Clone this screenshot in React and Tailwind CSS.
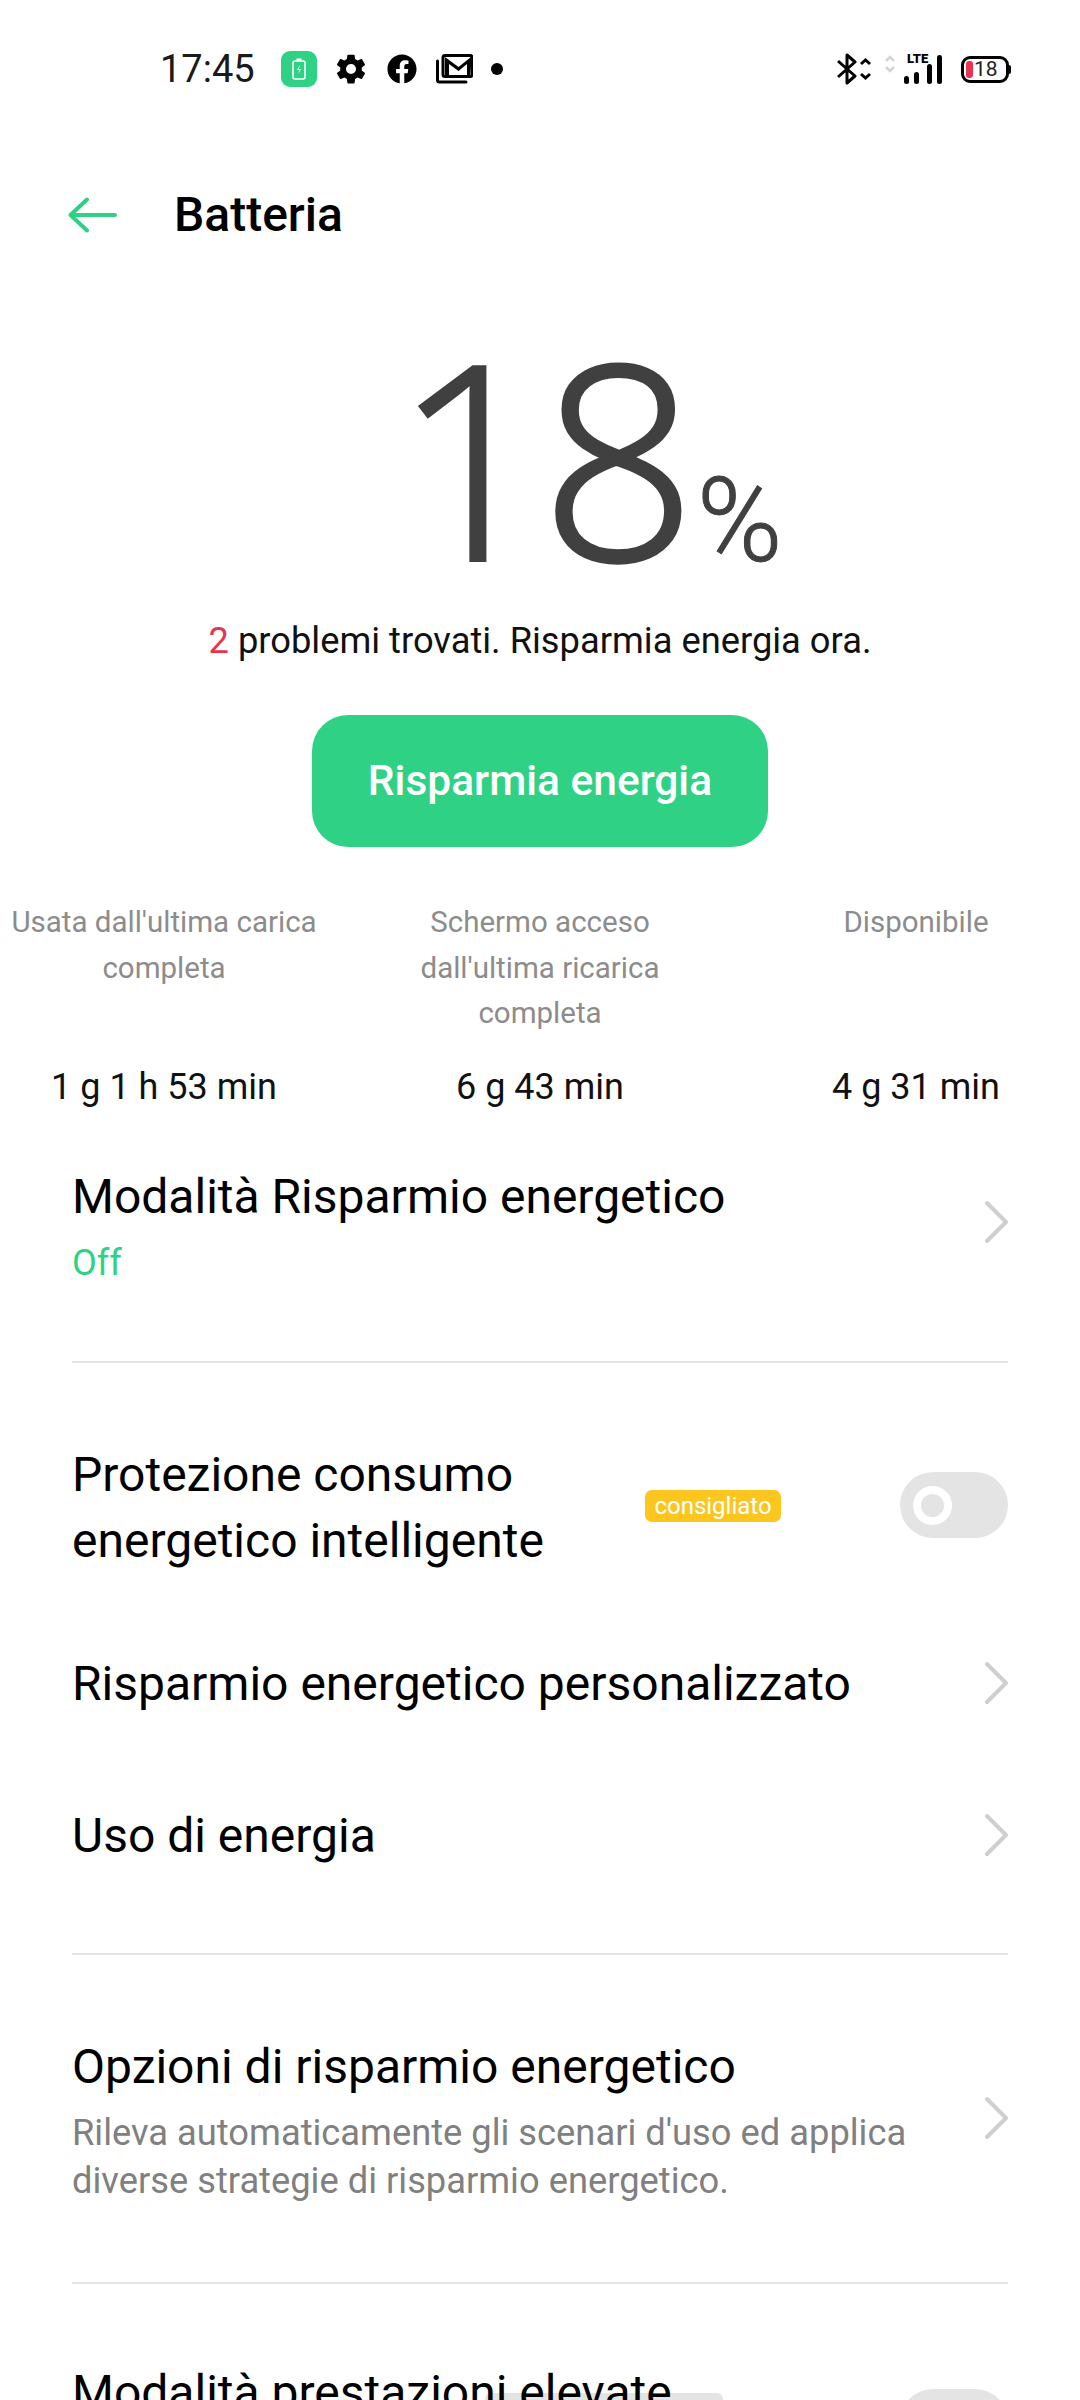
import React from 'react'
import { FaFacebook } from 'react-icons/fa'
import { IoSettingsSharp } from 'react-icons/io5'

const Chevron = ({ className = '' }) => (
  <svg width="26" height="44" viewBox="0 0 26 44" fill="none" className={`shrink-0 ${className}`}>
    <path d="M5 3l19 19L5 41" stroke="#cfcfcf" strokeWidth="4" strokeLinecap="round" strokeLinejoin="round" />
  </svg>
)

const Toggle = () => (
  <div className="w-[108px] h-[66px] rounded-full bg-[#e4e4e4] flex items-center pl-[13px] shrink-0">
    <div className="w-[39px] h-[39px] rounded-full border-[8px] border-white" />
  </div>
)

const StatusBar = () => (
  <div className="h-[138px] flex items-center pl-[160px] pr-[69px]">
    <span className="text-[38px] leading-none text-[#1a1a1a] w-[121px]">17:45</span>
    <div className="w-[36px] h-[36px] rounded-[9px] bg-[#2fd284] flex items-center justify-center">
      <svg width="14" height="22" viewBox="0 0 14 22" fill="none">
        <rect x="1" y="3" width="12" height="18" rx="2" stroke="white" strokeWidth="1.6" />
        <rect x="4.500" y="0.500" width="5" height="2" fill="white" />
        <path d="M8 7l-3 5h2.500L6 16l3.200-5H6.800z" fill="white" />
      </svg>
    </div>
    <IoSettingsSharp className="ml-[18px] text-black" size={32} />
    <FaFacebook className="ml-[20px] text-black" size={30} />
    <svg className="ml-[19px]" width="37" height="30" viewBox="0 0 37 30" fill="none">
      <rect x="7" y="1.500" width="29" height="21" rx="2" stroke="black" strokeWidth="3" />
      <path d="M9 3l13.500 10L35 3v9l-1 9h-3V10l-8.500 7L13 10v11H9z" fill="black" />
      <path d="M1.500 7v19a2 2 0 002 2H30" stroke="black" strokeWidth="3" strokeLinecap="round" />
    </svg>
    <div className="ml-[18px] w-[12px] h-[12px] rounded-full bg-black" />
    <div className="ml-auto flex items-center">
      <svg width="34" height="32" viewBox="0 0 34 32" fill="none" stroke="black" strokeWidth="3">
        <path d="M1 8l17 15-8 7V2l8 7L1 24" strokeLinejoin="round" />
        <path d="M24 11l4.500-4 4.500 4M24 21l4.500 4 4.500-4" />
      </svg>
      <svg className="ml-[14px] -mt-[10px]" width="10" height="20" viewBox="0 0 10 20" fill="none" stroke="#d4d4d4" strokeWidth="2.500">
        <path d="M1 7l4-4 4 4M1 13l4 4 4-4" />
      </svg>
      <div className="relative ml-[9px] w-[38px] h-[29px] flex items-end">
        <span className="absolute left-[3px] top-[-3px] text-[13px] font-black leading-none text-black">LTE</span>
        <div className="w-[5px] h-[8px] rounded-sm bg-black" />
        <div className="ml-[5px] w-[5px] h-[12px] rounded-sm bg-black" />
        <div className="ml-[8px] w-[5px] h-[20px] rounded-sm bg-black" />
        <div className="ml-[5px] w-[5px] h-[29px] rounded-sm bg-black" />
      </div>
      <div className="ml-[19px] w-[48px] h-[27px] border-[3px] border-black rounded-[9px] flex items-center pl-[2px]">
        <div className="w-[7px] h-[17px] rounded-[3px] bg-[#e8354f] shrink-0" />
        <span className="text-[21px] leading-none text-[#222] ml-[1px]">18</span>
      </div>
      <div className="w-[2px] h-[9px] rounded-r-sm bg-black" />
    </div>
  </div>
)

const Stat = ({ label, value, labelWidth }) => (
  <div className="flex flex-col items-center w-[376px] h-[210px]">
    <div className={`text-[29.500px] leading-[45.500px] text-[#8c8c8c] text-center ${labelWidth}`}>{label}</div>
    <div className="mt-auto text-[36px] leading-[46px] text-[#111]">{value}</div>
  </div>
)

const Row = ({ title }) => (
  <div className="flex items-center justify-between h-[152px]">
    <span className="text-[48px] leading-[66px] text-black pt-[2px]">{title}</span>
    <Chevron />
  </div>
)

export default function App() {
  return (
    <div className="w-[1080px] h-[2400px] overflow-hidden bg-white font-['Roboto',sans-serif]">
      <StatusBar />

      {/* header */}
      <div className="h-[154px] flex items-center pl-[68px]">
        <svg width="49" height="36" viewBox="0 0 49 36" fill="none">
          <path d="M19 2.500L2.500 18 19 33.500M3 18h44" stroke="#2fd284" strokeWidth="4" strokeLinecap="round" strokeLinejoin="round" />
        </svg>
        <h1 className="ml-[57px] text-[48px] leading-none font-medium text-black">Batteria</h1>
      </div>

      {/* percent */}
      <div className="h-[315px] flex items-end justify-center pl-[97px]">
        <span className="font-['Open_Sans',sans-serif] text-[270px] leading-[230px] font-light tracking-[-7px] text-[#404040] [-webkit-text-stroke:4px_#404040] mb-[37px]">18</span>
        <span className="text-[116px] leading-[116px] font-light text-[#404040] [-webkit-text-stroke:1px_#404040] ml-[8px] mb-[28px]">%</span>
      </div>

      <p className="mt-[11px] text-center text-[36.300px] leading-[46px] text-[#111]">
        <span className="text-[#e8354f]">2</span> problemi trovati. Risparmia energia ora.
      </p>

      <div className="flex justify-center mt-[51px]">
        <button className="w-[456px] h-[132px] rounded-[36px] bg-[#2fd284] text-white text-[42.500px] font-medium">Risparmia energia</button>
      </div>

      <div className="flex justify-between -ml-[24px] w-[1128px] mt-[53px]">
        <Stat label="Usata dall'ultima carica completa" value="1 g 1 h 53 min" labelWidth="w-[330px]" />
        <Stat label="Schermo acceso dall'ultima ricarica completa" value="6 g 43 min" labelWidth="w-[260px]" />
        <Stat label="Disponibile" value="4 g 31 min" labelWidth="w-[260px]" />
      </div>

      <div className="px-[72px]">
        <div className="h-[253px] flex items-start justify-between border-b-2 border-[#e4e4e4] pt-[54px]">
          <div>
            <div className="text-[48px] leading-[66px] text-black">Modalità Risparmio energetico</div>
            <div className="text-[36px] leading-[50px] text-[#2fd284] mt-[8px]">Off</div>
          </div>
          <Chevron className="mt-[36px]" />
        </div>

        <div className="h-[244px] flex items-center justify-between pt-[40px]">
          <div className="text-[48px] leading-[66px] text-black w-[540px] mt-[6px]">Protezione consumo energetico intelligente</div>
          <div className="flex items-center gap-[119px]">
            <span className="h-[32px] w-[136px] rounded-[7px] bg-[#fcc61f] text-white text-[24px] leading-[32px] text-center mt-[2px]">consigliato</span>
            <Toggle />
          </div>
        </div>

        <Row title="Risparmio energetico personalizzato" />
        <Row title="Uso di energia" />

        <div className="h-[44px] border-b-2 border-[#e4e4e4]" />

        <div className="h-[327px] flex items-start justify-between pt-[79px]">
          <div className="w-[860px]">
            <div className="text-[48px] leading-[66px] text-black">Opzioni di risparmio energetico</div>
            <div className="text-[36.300px] leading-[48px] text-[#808080] mt-[9px]">Rileva automaticamente gli scenari d'uso ed applica diverse strategie di risparmio energetico.</div>
          </div>
          <Chevron className="mt-[62px]" />
        </div>

        <div className="border-t-2 border-[#e4e4e4]" />

        <div className="relative flex justify-between items-start pt-[76px]">
          <div className="absolute left-[413px] top-[109px] w-[238px] h-[40px] rounded-[6px] bg-[#e4e4e4]" />
          <div className="relative text-[48px] leading-[66px] text-black">Modalità prestazioni elevate</div>
          <div className="mt-[29px]"><Toggle /></div>
        </div>
      </div>
    </div>
  )
}
